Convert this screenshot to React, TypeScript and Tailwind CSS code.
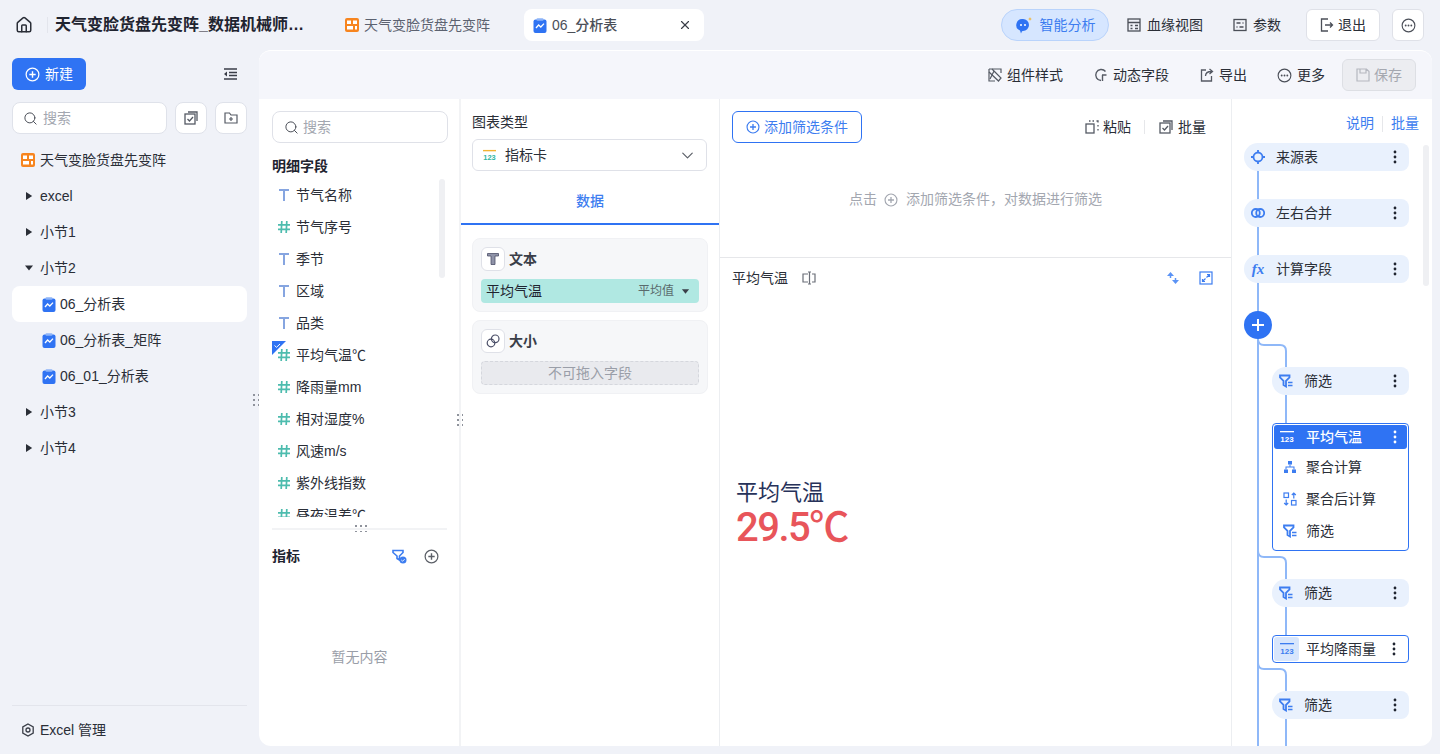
import { ChevronDown, Home, Search, X } from 'lucide-react';

const font = "font-['Liberation_Sans','Noto_Sans_CJK_SC',sans-serif]";

// ---- icons ----
function Board({ className = 'w-[14px] h-[14px]' }: { className?: string }) {
  return (
    <svg viewBox="0 0 14 14" className={className}>
      <rect width="14" height="14" rx="2" fill="#f7851f" />
      <rect x="2" y="2.5" width="4" height="3.5" fill="#fff" />
      <rect x="8" y="2.5" width="4" height="3.5" fill="#fff" />
      <rect x="2" y="8" width="6" height="3.5" fill="#fff" />
      <rect x="10" y="8" width="2" height="3.5" fill="#fff" />
    </svg>
  );
}

function DocChart() {
  return (
    <svg viewBox="0 0 14 15" className="w-[14px] h-[15px] shrink-0">
      <rect x="0.5" y="1.5" width="13" height="13.5" rx="2" fill="#2f73f3" />
      <rect x="3.5" y="0.2" width="7" height="2.6" rx="1" fill="#8db4f8" />
      <path d="M3 10l2.6-3 2.2 2L11 5.6" fill="none" stroke="#fff" strokeWidth="1.3" />
    </svg>
  );
}

function PlusCircle({ color = '#5c6068', size = 16 }: { color?: string; size?: number }) {
  return (
    <svg viewBox="0 0 16 16" width={size} height={size} className="shrink-0">
      <circle cx="8" cy="8" r="6.8" fill="none" stroke={color} strokeWidth="1.3" />
      <path d="M8 4.6v6.8M4.6 8h6.8" stroke={color} strokeWidth="1.5" />
    </svg>
  );
}

function MoreCircle() {
  return (
    <svg viewBox="0 0 16 16" className="w-[15px] h-[15px] shrink-0">
      <circle cx="8" cy="8" r="6.8" fill="none" stroke="#4b4f58" strokeWidth="1.2" />
      <circle cx="5" cy="8" r="1" fill="#4b4f58" />
      <circle cx="8" cy="8" r="1" fill="#4b4f58" />
      <circle cx="11" cy="8" r="1" fill="#4b4f58" />
    </svg>
  );
}

function Caret({ open }: { open?: boolean }) {
  return (
    <svg viewBox="0 0 10 10" className="w-[10px] h-[10px] shrink-0">
      {open ? <path d="M1 2.5h8L5 7.5z" fill="#2a2e37" /> : <path d="M2 1l6.200 4L2 9z" fill="#2a2e37" />}
    </svg>
  );
}

function Kebab({ color = '#1f2430' }: { color?: string }) {
  return (
    <svg viewBox="0 0 4 14" className="w-[4px] h-[14px] shrink-0">
      <circle cx="2" cy="2" r="1.4" fill={color} />
      <circle cx="2" cy="7" r="1.4" fill={color} />
      <circle cx="2" cy="12" r="1.4" fill={color} />
    </svg>
  );
}

function BatchIcon() {
  return (
    <svg viewBox="0 0 14 14" className="w-[14px] h-[14px] shrink-0" fill="none" stroke="#555a64" strokeWidth="1.3">
      <rect x="1" y="3" width="10" height="10" />
      <path d="M4 1h9v9" />
      <path d="M3.5 8l2 2 3.5-4" />
    </svg>
  );
}

function FolderPlus() {
  return (
    <svg viewBox="0 0 14 14" className="w-[14px] h-[14px]" fill="none" stroke="#555a64" strokeWidth="1.2">
      <path d="M1 2h4.5l1.5 2h6v8H1z" />
      <path d="M7 6v4M5 8h4" />
    </svg>
  );
}

function FilterIcon({ color = '#3d7df0' }: { color?: string }) {
  return (
    <svg viewBox="0 0 14 14" className="w-[14px] h-[14px] shrink-0">
      <path d="M1 1.500h9.500v1.800L7 6.800v5.700L4.500 11V6.800L1 3.300z" fill="none" stroke={color} strokeWidth="1.800" />
      <path d="M9 8.500h4.500M9 11.500h4.500" stroke={color} strokeWidth="1.300" />
    </svg>
  );
}

function Icon123({ color = '#3d7df0', size = 'w-[16px] h-[14px]' }: { color?: string; size?: string }) {
  return (
    <svg viewBox="0 0 16 14" className={`${size} shrink-0`}>
      <rect x="1" y="1" width="14" height="1.3" fill={color} />
      <text x="8" y="12" textAnchor="middle" fontSize="8" fontWeight="700" fontFamily="Liberation Sans" fill={color}>123</text>
    </svg>
  );
}

function GlyphT() {
  return (
    <svg viewBox="0 0 12 14" className="w-[12px] h-[14px] shrink-0">
      <path d="M1 2h10M6 2v11" stroke="#86a5e0" strokeWidth="2" fill="none" />
    </svg>
  );
}

function GlyphHash() {
  return (
    <svg viewBox="0 0 12 14" className="w-[12px] h-[14px] shrink-0">
      <path d="M0 4.800h12M0 9.400h12M3.800 1l-.6 12M8.800 1l-.6 12" stroke="#4dbcae" strokeWidth="1.700" fill="none" />
    </svg>
  );
}

// drag handle, two columns of dots
function Dots({ className = '' }: { className?: string }) {
  return (
    <div className={`absolute grid grid-cols-2 gap-x-[3px] gap-y-[3px] ${className}`}>
      {[0, 1, 2, 3, 4, 5].map((i) => (
        <span key={i} className="w-[1.5px] h-[2px] bg-[#8f939c]" />
      ))}
    </div>
  );
}

function ToolButton({ icon, label }: { icon: React.ReactNode; label: string }) {
  return (
    <div className="flex items-center gap-[5px] text-[14px] text-[#2a2e37]">
      {icon}
      <span>{label}</span>
    </div>
  );
}

// ---- sidebar ----
function TreeGroup({ label, open }: { label: string; open?: boolean }) {
  return (
    <div className="h-9 flex items-center pl-[11px] gap-[7px] text-[14px] text-[#2a2e37]">
      <span className="w-[11px] flex justify-center"><Caret open={open} /></span>
      <span className="-ml-px">{label}</span>
    </div>
  );
}

function TreeDoc({ label, active }: { label: string; active?: boolean }) {
  return (
    <div className={`h-9 flex items-center pl-[30px] gap-[4px] text-[14px] text-[#2a2e37] rounded-lg ${active ? 'bg-white' : ''}`}>
      <DocChart />
      <span>{label}</span>
    </div>
  );
}

function Sidebar() {
  return (
    <div className="w-[259px] shrink-0 relative flex flex-col pt-2 pl-3 pr-3 -mb-2">
      <div className="flex items-center justify-between">
        <div className="w-[74px] h-8 rounded-md bg-[#2f73f3] text-white text-[14px] flex items-center justify-center gap-[5px]">
          <PlusCircle color="#fff" size={15} />
          <span>新建</span>
        </div>
        <svg viewBox="0 0 14 12" className="w-[14px] h-[12px] mr-[10px]" fill="none" stroke="#3a3e48" strokeWidth="1.6">
          <path d="M1 1h13M6 4.500h8M6 7.500h8M1 11h13" />
          <path d="M4 3.500L1 6l3 2.500z" fill="#3a3e48" stroke="none" />
        </svg>
      </div>
      <div className="flex gap-2 mt-3">
        <div className="w-[155px] h-8 bg-white rounded-lg border border-[#dfe2ea] flex items-center pl-[10px] gap-[5px] text-[14px] text-[#a3a7b0]">
          <Search size={15} strokeWidth={1.6} color="#4b4f58" />
          <span>搜索</span>
        </div>
        <div className="w-8 h-8 bg-white rounded-lg border border-[#dfe2ea] flex items-center justify-center"><BatchIcon /></div>
        <div className="w-8 h-8 bg-white rounded-lg border border-[#dfe2ea] flex items-center justify-center"><FolderPlus /></div>
      </div>
      <div className="mt-2 flex flex-col">
        <div className="h-9 flex items-center pl-[9px] gap-[5px] text-[14px] text-[#2a2e37]">
          <Board />
          <span>天气变脸货盘先变阵</span>
        </div>
        <TreeGroup label="excel" />
        <TreeGroup label="小节1" />
        <TreeGroup label="小节2" open />
        <TreeDoc label="06_分析表" active />
        <TreeDoc label="06_分析表_矩阵" />
        <TreeDoc label="06_01_分析表" />
        <TreeGroup label="小节3" />
        <TreeGroup label="小节4" />
      </div>
      <div className="mt-auto border-t border-[#e3e5ec] h-[49px] flex items-center pl-[9px] gap-[5px] text-[14px] text-[#2a2e37]">
        <svg viewBox="0 0 14 14" className="w-[14px] h-[14px]" fill="none" stroke="#3a3e48" strokeWidth="1.3">
          <path d="M7 1l5.200 3v6L7 13l-5.200-3V4z" />
          <circle cx="7" cy="7" r="2" />
        </svg>
        <span>Excel 管理</span>
      </div>
      <Dots className="left-[253px] top-[344px]" />
    </div>
  );
}

// ---- fields column ----
const fields: { name: string; kind: 'text' | 'num'; checked?: boolean }[] = [
  { name: '节气名称', kind: 'text' },
  { name: '节气序号', kind: 'num' },
  { name: '季节', kind: 'text' },
  { name: '区域', kind: 'text' },
  { name: '品类', kind: 'text' },
  { name: '平均气温℃', kind: 'num', checked: true },
  { name: '降雨量mm', kind: 'num' },
  { name: '相对湿度%', kind: 'num' },
  { name: '风速m/s', kind: 'num' },
  { name: '紫外线指数', kind: 'num' },
  { name: '昼夜温差℃', kind: 'num' },
];

function FieldsColumn() {
  return (
    <div className="w-[202px] shrink-0 border-r-2 border-[#f2f3f5] relative flex flex-col pl-[13px] pr-3 pt-3">
      <div className="w-[176px] h-8 rounded-lg border border-[#dfe1e8] flex items-center pl-[11px] gap-[4px] text-[14px] text-[#a3a7b0]">
        <Search size={15} strokeWidth={1.6} color="#4b4f58" />
        <span>搜索</span>
      </div>
      <div className="mt-[14px] h-[18px] leading-[18px] text-[14px] font-bold text-[#1f2430]">明细字段</div>
      <div className="relative h-[338px] mt-[4px] overflow-hidden">
        {fields.map((f) => (
          <div key={f.name} className="h-8 flex items-center pl-[6px] gap-[6px] text-[14px] text-[#2a2e37] relative">
            {f.kind === 'text' ? <GlyphT /> : <GlyphHash />}
            <span>{f.name}</span>
            {f.checked && (
              <svg viewBox="0 0 14 14" className="absolute left-0 top-[2px] w-[14px] h-[14px]">
                <path d="M0 0h14L0 14z" fill="#2f73f3" />
                <path d="M2.500 4.500l2 1.800 3.500-3.300" fill="none" stroke="#fff" strokeWidth="1" />
              </svg>
            )}
          </div>
        ))}
        <div className="absolute right-[2px] top-0 w-[6px] h-[99px] rounded bg-[#eff0f3]" />
      </div>
      <div className="mt-[11px] h-[2px] bg-[#f2f3f5] relative">
        <div className="absolute left-[83px] -top-[3px] grid grid-cols-3 gap-x-[3px] gap-y-[4px]">
          {[0, 1, 2, 3, 4, 5].map((i) => (
            <span key={i} className="w-[2px] h-[1.5px] bg-[#8f939c]" />
          ))}
        </div>
      </div>
      <div className="mt-[16px] flex items-center justify-between h-[20px]">
        <span className="text-[14px] font-bold text-[#1f2430]">指标</span>
        <div className="flex items-center gap-[17px] pr-[8px]">
          <svg viewBox="0 0 15 15" className="w-[15px] h-[15px]">
            <path d="M1 1.500h10v2L7.500 7v4L5 9.500V7L1 3.500z" fill="none" stroke="#3d7df0" strokeWidth="1.600" />
            <circle cx="11" cy="11" r="3.500" fill="#3d7df0" />
            <path d="M9.300 11l1.300 1.200 2-2" fill="none" stroke="#fff" strokeWidth="0.9" />
          </svg>
          <PlusCircle color="#5c6068" size={15} />
        </div>
      </div>
      <div className="mt-[81px] text-center text-[14px] text-[#9a9ea8]">暂无内容</div>
      <Dots className="-right-[4px] top-[315px]" />
    </div>
  );
}

// ---- chart config column ----
function ConfigColumn() {
  return (
    <div className="w-[259px] shrink-0 border-r border-[#eceef1] flex flex-col">
      <div className="px-[11px] pt-[14px]">
        <div className="h-[18px] leading-[18px] text-[14px] text-[#2a2e37]">图表类型</div>
        <div className="mt-[8px] w-[235px] h-8 rounded-md border border-[#dfe1e8] flex items-center pl-[9px] pr-[9px] gap-[8px] text-[14px] text-[#2a2e37]">
          <svg viewBox="0 0 16 14" className="w-[15px] h-[13px] shrink-0">
            <rect x="1" y="1" width="14" height="1.500" fill="#f3b332" />
            <text x="8" y="12" textAnchor="middle" fontSize="8" fontWeight="700" fontFamily="Liberation Sans" fill="#2fb5a2">123</text>
          </svg>
          <span className="flex-1">指标卡</span>
          <ChevronDown size={19} strokeWidth={1.5} color="#5c6068" />
        </div>
      </div>
      <div className="h-[54px] pt-[9px] border-b-2 border-[#2f73f3] flex items-center justify-center text-[14px] font-medium text-[#3d7df0]">数据</div>
      <div className="px-[11px] pt-[13px] flex flex-col gap-2">
        <div className="w-[236px] h-[74px] rounded-lg bg-[#f6f7f9] border border-[#f0f1f4] px-2 pt-2">
          <div className="flex items-center gap-[4px]">
            <div className="w-6 h-6 rounded-md bg-white border border-[#dfe1e8] flex items-center justify-center">
              <svg viewBox="0 0 14 14" className="w-[14px] h-[14px]">
                <path d="M1.500 1.500h11v2.500h-3.500v8.500h-4V4H1.500z" fill="#8f93a8" stroke="#4b4f68" strokeWidth="0.8" />
              </svg>
            </div>
            <span className="text-[14px] font-bold text-[#3a3e48]">文本</span>
          </div>
          <div className="mt-2 w-[218px] h-6 rounded bg-[#b0e8e2] flex items-center pl-[5px] pr-[9px] text-[14px] text-[#1f2430]">
            <span className="flex-1">平均气温</span>
            <span className="text-[12px] text-[#5a6a6c]">平均值</span>
            <svg viewBox="0 0 10 10" className="w-[9px] h-[9px] ml-[7px]"><path d="M1 2.500h8l-4 5z" fill="#3a3e48" /></svg>
          </div>
        </div>
        <div className="w-[236px] h-[74px] rounded-lg bg-[#f6f7f9] border border-[#f0f1f4] px-2 pt-2">
          <div className="flex items-center gap-[4px]">
            <div className="w-6 h-6 rounded-md bg-white border border-[#dfe1e8] flex items-center justify-center">
              <svg viewBox="0 0 14 14" className="w-[14px] h-[14px]" fill="none" stroke="#4b4f68" strokeWidth="1.2">
                <circle cx="5" cy="9" r="3.800" />
                <circle cx="9.200" cy="4.800" r="3.800" />
              </svg>
            </div>
            <span className="text-[14px] font-bold text-[#3a3e48]">大小</span>
          </div>
          <div className="mt-2 w-[218px] h-6 rounded bg-[#e9eaee] border border-dashed border-[#d5d7dd] flex items-center justify-center text-[14px] text-[#9a9ea8]">
            不可拖入字段
          </div>
        </div>
      </div>
    </div>
  );
}

// ---- center preview ----
function Preview() {
  return (
    <div className="w-[512px] shrink-0 border-r border-[#eceef1] flex flex-col">
      <div className="h-[159px] border-b border-[#e6e7ea] px-3 pt-3 flex flex-col">
        <div className="flex items-center justify-between">
          <div className="w-[130px] h-8 rounded-md border border-[#2f73f3] flex items-center justify-center gap-[4px] text-[14px] text-[#3d7df0]">
            <PlusCircle color="#3d7df0" size={14} />
            <span>添加筛选条件</span>
          </div>
          <div className="flex items-center pr-[13px] text-[14px] text-[#2a2e37]">
            <svg viewBox="0 0 14 14" className="w-[14px] h-[14px] mr-[4px]" fill="none" stroke="#555a64" strokeWidth="1.300">
              <rect x="1" y="4" width="8" height="9" />
              <path d="M4 1h1.500M7.500 1H9M11.500 1H13v1.500M13 5v1.500M13 9v1.500" />
            </svg>
            <span>粘贴</span>
            <span className="w-px h-[14px] bg-[#e6e7ea] ml-[13px] mr-[14px]" />
            <span className="mr-[5px] flex"><BatchIcon /></span>
            <span>批量</span>
          </div>
        </div>
        <div className="mt-[46px] flex items-center justify-center text-[14px] text-[#a3a7b0]">
          <span>点击</span>
          <span className="ml-[7px] mr-[8px] flex"><PlusCircle color="#a3a7b0" size={14} /></span>
          <span>添加筛选条件，对数据进行筛选</span>
        </div>
      </div>
      <div className="flex-1 flex flex-col px-3">
        <div className="h-[40px] flex items-center">
          <span className="text-[14px] text-[#2a2e37]">平均气温</span>
          <svg viewBox="0 0 14 14" className="w-[14px] h-[14px] ml-[14px]" fill="none" stroke="#6b6f78" strokeWidth="1.200">
            <path d="M6 3H1v8h5M10 3h3v8h-3" />
            <path d="M6 1h3M6 13h3M7.500 1v12" />
          </svg>
          <svg viewBox="0 0 14 14" className="w-[14px] h-[14px] ml-auto mr-[19px]">
            <path d="M4.500 1L8 5H1z M9.500 13L13 9H6z" fill="#5b93f5" />
            <path d="M4.500 4v3M9.500 7v3" stroke="#5b93f5" strokeWidth="1.500" />
          </svg>
          <svg viewBox="0 0 14 14" className="w-[14px] h-[14px] mr-[6px]" fill="none" stroke="#3d7df0" strokeWidth="1.200">
            <rect x="1" y="1" width="12" height="12" />
            <path d="M8 3.500h2.500V6M10.500 3.500L7.500 6.500M6 10.500H3.500V8M3.500 10.500l3-3" />
          </svg>
        </div>
        <div className="pl-[4px] mt-[180px] text-[22px] leading-[30px] text-[#27325a]">平均气温</div>
        <div className="pl-[4px] -mt-[2px] text-[40px] leading-[44px] font-medium font-['Roboto','Noto_Sans_CJK_SC',sans-serif] tracking-[-1.5px] text-[#e8555a]">29.5℃</div>
      </div>
    </div>
  );
}

// ---- flow panel ----
function FlowNode({ icon, label, indent }: { icon: React.ReactNode; label: string; indent?: boolean }) {
  return (
    <div className={`h-7 rounded-l-[14px] rounded-r-lg bg-[#e9f1fd] flex items-center pl-[7px] pr-[12px] text-[14px] text-[#2a2e37] ${indent ? 'ml-7' : ''}`}>
      <span className="w-[14px] flex justify-center">{icon}</span>
      <span className="ml-[11px] flex-1">{label}</span>
      <Kebab />
    </div>
  );
}

function FlowPanel() {
  return (
    <div className="flex-1 relative overflow-hidden pl-3 pt-[44px]">
      {/* connector lines */}
      <svg className="absolute left-0 top-0 w-[200px] h-[648px]" fill="none" stroke="#8fb8f8" strokeWidth="2">
        <path d="M26 70V647" />
        <path d="M26 240c0 4 2 6 6 6h16c4 0 6 2 6 6v16M54 296v30" />
        <path d="M26 452c0 4 2 6 6 6h16c4 0 6 2 6 6v16M54 508v30" />
        <path d="M26 564c0 4 2 6 6 6h16c4 0 6 2 6 6v16M54 620v28" />
      </svg>
      <div className="absolute right-[3px] top-[46px] w-[6px] h-[141px] rounded bg-[#eff0f3]" />
      <div className="absolute right-[13px] top-[14px] flex items-center text-[14px] text-[#3d7df0]">
        <span>说明</span>
        <span className="w-px h-[16px] bg-[#e6e7ea] mx-[8px]" />
        <span>批量</span>
      </div>
      <div className="relative w-[165px] flex flex-col">
        <FlowNode
          label="来源表"
          icon={
            <svg viewBox="0 0 14 14" className="w-[14px] h-[14px]" fill="none" stroke="#3d7df0" strokeWidth="1.800">
              <circle cx="7" cy="7" r="4.500" />
              <path d="M7 0v3M7 11v3M0 7h3M11 7h3" />
            </svg>
          }
        />
        <div className="h-7" />
        <FlowNode
          label="左右合并"
          icon={
            <svg viewBox="0 0 14 14" className="w-[14px] h-[14px]" fill="none" stroke="#3d7df0" strokeWidth="1.800">
              <circle cx="4.800" cy="7" r="4" />
              <circle cx="9.200" cy="7" r="4" />
            </svg>
          }
        />
        <div className="h-7" />
        <FlowNode label="计算字段" icon={<span className="italic font-bold font-['Liberation_Serif',serif] text-[15px] leading-none text-[#3d7df0]">fx</span>} />
        <div className="h-7" />
        <div className="w-7 h-7 rounded-full bg-[#2f73f3] flex items-center justify-center">
          <svg viewBox="0 0 14 14" className="w-[14px] h-[14px]"><path d="M7 1v12M1 7h12" stroke="#fff" strokeWidth="2" /></svg>
        </div>
        <div className="h-7" />
        <FlowNode label="筛选" icon={<FilterIcon />} indent />
        <div className="h-7" />
        <div className="ml-7 h-[128px] rounded border border-[#2f73f3] bg-white p-px flex flex-col">
          <div className="h-6 rounded-[3px] bg-[#2f73f3] flex items-center pl-[5px] pr-[10px] text-[14px] font-medium text-white">
            <Icon123 color="#fff" />
            <span className="ml-[11px] flex-1">平均气温</span>
            <Kebab color="#fff" />
          </div>
          <div className="h-8 mt-[2px] flex items-center pl-[9px] text-[14px] text-[#2a2e37]">
            <svg viewBox="0 0 14 14" className="w-[14px] h-[14px] shrink-0" fill="#3d7df0">
              <rect x="5" y="1" width="4" height="3.500" />
              <rect x="1" y="9.500" width="4" height="3.500" />
              <rect x="9" y="9.500" width="4" height="3.500" />
              <path d="M6.500 4.500h1V6.500H11.500V9.500h-1V7.500h-7V9.500h-1V6.500h4z" />
            </svg>
            <span className="ml-[9px]">聚合计算</span>
          </div>
          <div className="h-8 flex items-center pl-[9px] text-[14px] text-[#2a2e37]">
            <svg viewBox="0 0 14 14" className="w-[14px] h-[14px] shrink-0" fill="none" stroke="#3d7df0" strokeWidth="1.200">
              <rect x="1" y="1" width="4.500" height="4.500" />
              <rect x="8.500" y="8.500" width="4.500" height="4.500" />
              <path d="M3.200 7.500V13M1.200 11l2 2 2-2M10.800 6.500V1M8.800 3l2-2 2 2" />
            </svg>
            <span className="ml-[9px]">聚合后计算</span>
          </div>
          <div className="h-8 flex items-center pl-[9px] text-[14px] text-[#2a2e37]">
            <FilterIcon />
            <span className="ml-[9px]">筛选</span>
          </div>
        </div>
        <div className="h-7" />
        <FlowNode label="筛选" icon={<FilterIcon />} indent />
        <div className="h-7" />
        <div className="ml-7 h-7 rounded border border-[#2f73f3] bg-white flex items-center pr-[12px] text-[14px] text-[#2a2e37]">
          <div className="w-[25px] h-[24px] ml-px rounded-[3px] bg-[#d8e6fc] flex items-center justify-center">
            <Icon123 />
          </div>
          <span className="ml-[7px] flex-1">平均降雨量</span>
          <Kebab />
        </div>
        <div className="h-7" />
        <FlowNode label="筛选" icon={<FilterIcon />} indent />
      </div>
    </div>
  );
}

// ---- page ----
export default function App() {
  return (
    <div className={`w-[1440px] h-[754px] overflow-hidden bg-[#f0f2f8] flex flex-col ${font}`}>
      {/* top bar */}
      <div className="h-[50px] shrink-0 flex items-center pl-[15px] pr-4">
        <Home size={18} strokeWidth={2} color="#2a2e37" />
        <span className="w-px h-4 bg-[#e3e5ec] ml-[14px]" />
        <div className="ml-[7px] w-[252px] truncate text-[16px] font-bold text-[#1f2430]">天气变脸货盘先变阵_数据机械师的数据分析</div>
        <div className="ml-[38px] flex items-center gap-[5px] text-[14px] text-[#5c6270]">
          <Board />
          <span>天气变脸货盘先变阵</span>
        </div>
        <div className="ml-[34px] w-[180px] h-8 rounded-lg bg-white flex items-center pl-[9px] pr-3 gap-[5px] text-[14px] font-medium text-[#4b4f58]">
          <DocChart />
          <span className="flex-1">06_分析表</span>
          <X size={14} strokeWidth={2} color="#3a3e48" />
        </div>
        <div className="ml-auto flex items-center">
          <div className="w-[108px] h-8 rounded-2xl bg-[#d6e6ff] border border-[#b9d3fb] flex items-center justify-center gap-[7px] text-[14px] text-[#3d7df0]">
            <svg viewBox="0 0 18 18" className="w-[18px] h-[18px]">
              <path d="M8 3a6 6 0 0 1 0 12l-1 .2-1 2.300-1-3A6 6 0 0 1 8 3z" fill="#2f73f3" />
              <circle cx="6" cy="9" r="1" fill="#fff" />
              <circle cx="10" cy="9" r="1" fill="#fff" />
              <path d="M15 1l.6 1.600L17 3l-1.400.5L15 5l-.6-1.500L13 3l1.400-.4z" fill="#f3b332" />
            </svg>
            <span>智能分析</span>
          </div>
          <div className="ml-[18px] flex items-center gap-[6px] text-[14px] text-[#2a2e37]">
            <svg viewBox="0 0 14 14" className="w-[14px] h-[14px]" fill="none" stroke="#4b4f58" strokeWidth="1.300">
              <rect x="1" y="1" width="12" height="12" />
              <path d="M1 4.500h12M3.500 7.500h2M8 7.500h3M3.500 10.500h2M8 10.500h3" />
            </svg>
            <span>血缘视图</span>
          </div>
          <div className="ml-[30px] flex items-center gap-[6px] text-[14px] text-[#2a2e37]">
            <svg viewBox="0 0 14 14" className="w-[14px] h-[14px]" fill="none" stroke="#4b4f58" strokeWidth="1.300">
              <rect x="1" y="1.500" width="12" height="11" />
              <path d="M3.500 5h4M9.500 5h1M3.500 9h1M6.500 9h4" />
            </svg>
            <span>参数</span>
          </div>
          <div className="ml-[25px] w-[74px] h-8 rounded-md bg-white border border-[#dfe1e8] flex items-center justify-center gap-[4px] text-[14px] text-[#2a2e37]">
            <svg viewBox="0 0 14 14" className="w-[14px] h-[14px]" fill="none" stroke="#4b4f58" strokeWidth="1.300">
              <path d="M8 1H1.500v12H8M5 7h7M10 4.500L12.500 7 10 9.500" />
            </svg>
            <span>退出</span>
          </div>
          <div className="ml-3 w-8 h-8 rounded-md bg-white border border-[#dfe1e8] flex items-center justify-center"><MoreCircle /></div>
        </div>
      </div>
      {/* body */}
      <div className="flex-1 min-h-0 flex pb-2 pr-2">
        <Sidebar />
        <div className="flex-1 min-w-0 rounded-xl bg-white border-t border-white overflow-hidden flex flex-col">
          <div className="h-[48px] shrink-0 bg-[#f5f6fb] flex items-center justify-end pr-[16px]">
            <ToolButton
              label="组件样式"
              icon={
                <svg viewBox="0 0 14 14" className="w-[14px] h-[14px]" fill="none" stroke="#555a64" strokeWidth="1.200">
                  <path d="M1 1h12v4M1 1v12h6" />
                  <path d="M4 1l9 9-2.500 3L1 4M6 3l-4 8" />
                </svg>
              }
            />
            <div className="w-[31px]" />
            <ToolButton
              label="动态字段"
              icon={
                <svg viewBox="0 0 14 14" className="w-[14px] h-[14px]" fill="none" stroke="#555a64" strokeWidth="1.400">
                  <path d="M11.500 3.500A5.500 5.500 0 1 0 7 12.500M8 7h4.500M8.500 7v6" />
                </svg>
              }
            />
            <div className="w-[31px]" />
            <ToolButton
              label="导出"
              icon={
                <svg viewBox="0 0 14 14" className="w-[14px] h-[14px]" fill="none" stroke="#555a64" strokeWidth="1.300">
                  <path d="M6 2H1.500v11h10V8M5.500 8c0-3 2-4.500 6-4.500M9.500 1l3 2.500-3 2.500" />
                </svg>
              }
            />
            <div className="w-[30px]" />
            <ToolButton label="更多" icon={<MoreCircle />} />
            <div className="w-[17px]" />
            <div className="w-[74px] h-8 rounded-md bg-[#ecedf1] border border-[#dddfe4] flex items-center justify-center gap-[4px] text-[14px] text-[#a5a8b0]">
              <svg viewBox="0 0 14 14" className="w-[14px] h-[14px]" fill="none" stroke="#b5b8c0" strokeWidth="1.200">
                <path d="M1 1h9.500L13 3.500V13H1zM4 1v4h6V1" />
              </svg>
              <span>保存</span>
            </div>
          </div>
          <div className="flex-1 min-h-0 flex">
            <FieldsColumn />
            <ConfigColumn />
            <Preview />
            <FlowPanel />
          </div>
        </div>
      </div>
    </div>
  );
}
